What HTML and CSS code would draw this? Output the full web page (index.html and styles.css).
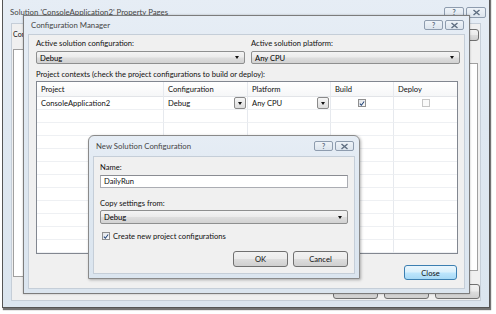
FILE: index.html
```html
<!DOCTYPE html>
<html lang="en">
<head>
    <meta charset="UTF-8">
    <meta name="viewport" content="width=device-width, initial-scale=1.0">
    <title>Configuration Manager</title>
    <link rel="stylesheet" href="styles.css">
</head>
<body>

<div class="desktop">

    <!-- property pages window, in the back -->
    <div class="win win-outer">
        <div class="titlebar">
            <span class="title">Solution 'ConsoleApplication2' Property Pages</span>
            <div class="caption">
                <span class="cap-btn">?</span>
                <span class="cap-btn"><svg width="9" height="7" viewBox="0 0 9 7"><path d="M1.5 1 L7.5 6 M7.5 1 L1.5 6" stroke="#5d6d80" stroke-width="1.4" fill="none"/></svg></span>
            </div>
        </div>
        <div class="client outer-client">
            <div class="outer-top">
                <span class="outer-label">Configuration:</span>
                <span class="btn outer-cm-btn"><i class="dot"></i></span>
            </div>
            <div class="outer-main">
                <div class="tree"></div>
                <div class="props"></div>
            </div>
            <div class="outer-foot">
                <span class="btn outer-btn"></span>
                <span class="btn outer-btn"></span>
                <span class="btn outer-btn"></span>
            </div>
        </div>
    </div>

    <!-- configuration manager -->
    <div class="win win-cm">
        <div class="titlebar">
            <span class="title">Configuration Manager</span>
            <div class="caption">
                <span class="cap-btn">?</span>
                <span class="cap-btn"><svg width="9" height="7" viewBox="0 0 9 7"><path d="M1.5 1 L7.5 6 M7.5 1 L1.5 6" stroke="#5d6d80" stroke-width="1.4" fill="none"/></svg></span>
            </div>
        </div>
        <div class="client cm-client">
            <div class="cm-pickers">
                <div class="field">
                    <label>Active solution configuration:</label>
                    <div class="combo"><span>Debug</span><i class="arrow"></i></div>
                </div>
                <div class="field">
                    <label>Active solution platform:</label>
                    <div class="combo"><span>Any CPU</span><i class="arrow"></i></div>
                </div>
            </div>
            <p class="section">Project contexts (check the project configurations to build or deploy):</p>
            <div class="grid">
                <div class="row head">
                    <div class="cell">Project</div>
                    <div class="cell">Configuration</div>
                    <div class="cell">Platform</div>
                    <div class="cell">Build</div>
                    <div class="cell">Deploy</div>
                </div>
                <div class="row">
                    <div class="cell">ConsoleApplication2</div>
                    <div class="cell">Debug <span class="drop"><i class="arrow"></i></span></div>
                    <div class="cell">Any CPU <span class="drop"><i class="arrow"></i></span></div>
                    <div class="cell center"><span class="check on"><svg width="7" height="7" viewBox="0 0 7 7"><path d="M1 3.6 L2.8 5.6 L6 1.2" stroke="#24467a" stroke-width="1.2" fill="none"/></svg></span></div>
                    <div class="cell center"><span class="check off"></span></div>
                </div>
                <div class="row"><div class="cell"></div><div class="cell"></div><div class="cell"></div><div class="cell"></div><div class="cell"></div></div>
                <div class="row"><div class="cell"></div><div class="cell"></div><div class="cell"></div><div class="cell"></div><div class="cell"></div></div>
                <div class="row"><div class="cell"></div><div class="cell"></div><div class="cell"></div><div class="cell"></div><div class="cell"></div></div>
                <div class="row"><div class="cell"></div><div class="cell"></div><div class="cell"></div><div class="cell"></div><div class="cell"></div></div>
                <div class="row"><div class="cell"></div><div class="cell"></div><div class="cell"></div><div class="cell"></div><div class="cell"></div></div>
                <div class="row"><div class="cell"></div><div class="cell"></div><div class="cell"></div><div class="cell"></div><div class="cell"></div></div>
                <div class="row"><div class="cell"></div><div class="cell"></div><div class="cell"></div><div class="cell"></div><div class="cell"></div></div>
                <div class="row"><div class="cell"></div><div class="cell"></div><div class="cell"></div><div class="cell"></div><div class="cell"></div></div>
                <div class="row"><div class="cell"></div><div class="cell"></div><div class="cell"></div><div class="cell"></div><div class="cell"></div></div>
                <div class="row"><div class="cell"></div><div class="cell"></div><div class="cell"></div><div class="cell"></div><div class="cell"></div></div>
                <div class="row"><div class="cell"></div><div class="cell"></div><div class="cell"></div><div class="cell"></div><div class="cell"></div></div>
            </div>
            <div class="cm-foot">
                <span class="btn btn-default">Close</span>
            </div>
        </div>
    </div>

    <!-- new solution configuration dialog, on top -->
    <div class="win win-new">
        <div class="titlebar">
            <span class="title">New Solution Configuration</span>
            <div class="caption">
                <span class="cap-btn">?</span>
                <span class="cap-btn"><svg width="9" height="7" viewBox="0 0 9 7"><path d="M1.5 1 L7.5 6 M7.5 1 L1.5 6" stroke="#5d6d80" stroke-width="1.4" fill="none"/></svg></span>
            </div>
        </div>
        <div class="client new-client">
            <label>Name:</label>
            <div class="textbox">DailyRun</div>
            <label class="copy-label">Copy settings from:</label>
            <div class="combo combo-tall"><span>Debug</span><i class="arrow"></i></div>
            <div class="check-row">
                <span class="check on"><svg width="7" height="7" viewBox="0 0 7 7"><path d="M1 3.6 L2.8 5.6 L6 1.2" stroke="#24467a" stroke-width="1.2" fill="none"/></svg></span>
                <span>Create new project configurations</span>
            </div>
            <div class="new-foot">
                <span class="btn btn-dlg">OK</span>
                <span class="btn btn-dlg">Cancel</span>
            </div>
        </div>
    </div>

</div>

</body>
</html>
```

FILE: styles.css
```css
body {
    margin: 0;
    padding: 0;
    background-color: #fff;
    font-family: "Lato", "Open Sans", sans-serif;
    font-size: 7.6px;
    color: #111;
}
.desktop {
    position: relative;
    width: 496px;
    height: 314px;
    overflow: hidden;
}

/* windows sit on a free canvas, so they are placed by coordinates */
.win {
    position: absolute;
    display: flex;
    flex-direction: column;
    box-sizing: border-box;
    background: linear-gradient(#e6edf5, #dfe8f1 40%, #dbe5ef);
    border: 1px solid #7c7c7c;
}
.win-outer {
    left: 2px;
    top: -4px;
    width: 488px;
    height: 312px;
    border-color: #555;
    box-shadow: 1px 2px 1px rgba(0, 0, 0, 0.55);
}
.win-cm {
    left: 23px;
    top: 15px;
    width: 447px;
    height: 279px;
    box-shadow: 0 0 2px rgba(0, 0, 0, 0.25);
}
.win-new {
    left: 88px;
    top: 135px;
    width: 272px;
    height: 144px;
    border-radius: 6px 6px 0 0;
    border-color: #8a8a8a;
    box-shadow: 1px 1px 3px rgba(0, 0, 0, 0.3);
}

.titlebar {
    display: flex;
    align-items: center;
    justify-content: space-between;
    padding: 0 5px 0 7px;
    flex-shrink: 0;
}
.win-outer .titlebar {
    height: 22px;
    padding-top: 4px;
    padding-right: 3px;
}
.win-cm .titlebar {
    height: 18px;
}
.win-new .titlebar {
    height: 20px;
}
.title {
    color: #464646;
    font-size: 7.8px;
    white-space: nowrap;
}
.caption {
    display: flex;
    gap: 2px;
}
.cap-btn {
    display: flex;
    align-items: center;
    justify-content: center;
    width: 17px;
    height: 8px;
    border: 1px solid #8e9cae;
    border-radius: 2px;
    background: linear-gradient(#eef3f8, #dce4ed);
    color: #5d6d80;
    font-size: 7px;
    font-weight: bold;
    line-height: 8px;
}
.win-outer .cap-btn {
    width: 18px;
    height: 9px;
}

.client {
    flex: 1;
    margin: 0 4px 4px 4px;
    background-color: #f0f0f0;
    border: 1px solid #c5ced8;
    box-sizing: border-box;
    display: flex;
    flex-direction: column;
}
label, .section {
    display: block;
    line-height: 10px;
    margin: 0;
    white-space: nowrap;
}

/* property pages (mostly hidden) */
.outer-client {
    margin: 0 8px 7px 8px;
    padding: 0 0 1px 1px;
}
.outer-top {
    display: flex;
    justify-content: space-between;
    align-items: center;
    margin-top: 5px;
    height: 12px;
    padding-right: 1px;
}
.outer-label {
    font-size: 7.1px;
    line-height: 8px;
}
.outer-cm-btn {
    width: 110px;
    height: 12px;
    justify-content: flex-end;
    padding-right: 6px;
}
.dot {
    display: block;
    width: 1px;
    height: 1px;
    background-color: #333;
    margin-top: 3px;
}
.outer-main {
    display: flex;
    gap: 10px;
    margin-top: 8px;
    height: 228px;
    align-items: flex-start;
}
.tree {
    width: 170px;
    height: 100%;
    background-color: #fff;
    border: 1px solid #a0a0a0;
    box-sizing: border-box;
}
.props {
    flex: 1;
    margin-top: 14px;
    margin-right: 2px;
    height: 208px;
    background-color: #fff;
    border: 1px solid #a0a0a0;
    box-sizing: border-box;
}
.outer-foot {
    display: flex;
    justify-content: flex-end;
    gap: 6px;
    margin-top: 7px;
}
.outer-btn {
    width: 45px;
    height: 15px;
}

/* buttons */
.btn {
    display: flex;
    align-items: center;
    justify-content: center;
    box-sizing: border-box;
    border: 1px solid #707070;
    border-radius: 3px;
    background: linear-gradient(#f2f2f2 0%, #ebebeb 48%, #dddddd 52%, #cfcfcf 100%);
    color: #111;
}
.btn-default {
    width: 53px;
    height: 15px;
    border-color: #3c7fb1;
    background: linear-gradient(#eaf6fd 0%, #d9f0fc 48%, #bee6fd 52%, #a7d9f5 100%);
}
.btn-dlg {
    width: 55px;
    height: 16px;
}

/* combo boxes */
.combo {
    display: flex;
    align-items: center;
    justify-content: space-between;
    height: 13px;
    box-sizing: border-box;
    border: 1px solid #8e8f8f;
    border-radius: 2px;
    padding: 0 5px 0 3px;
    background: linear-gradient(#f4f4f4 0%, #ebebeb 48%, #dedede 52%, #d2d2d2 100%);
    color: #000;
}
.combo-tall {
    height: 14px;
}
.arrow {
    display: block;
    width: 0;
    height: 0;
    border-left: 2.5px solid transparent;
    border-right: 2.5px solid transparent;
    border-top: 3px solid #111;
}

/* configuration manager */
.cm-client {
    padding: 3px 6px 0 7px;
}
.cm-pickers {
    display: grid;
    grid-template-columns: 209px 209px;
    gap: 6px;
}
.cm-pickers label {
    margin-bottom: 3px;
}
.section {
    margin-top: 5px;
    margin-bottom: 2px;
}
.grid {
    width: 422px;
    box-sizing: border-box;
    border: 1px solid #828790;
    background-color: #fff;
}
.row {
    display: grid;
    grid-template-columns: 127px 84px 83px 63px 63px;
    height: 13px;
}
.row.head {
    height: 15px;
    background: linear-gradient(#fff, #f5f6f7);
}
.cell {
    display: flex;
    align-items: center;
    justify-content: space-between;
    padding-left: 4px;
    box-sizing: border-box;
    border-right: 1px solid #e6e9ee;
    border-bottom: 1px solid #eef0f3;
    white-space: nowrap;
}
.head .cell {
    border-bottom-color: #e2e4e8;
}
.cell:last-child {
    border-right: none;
}
.cell.center {
    justify-content: center;
    padding-left: 0;
}
.drop {
    display: flex;
    align-items: center;
    justify-content: center;
    width: 12px;
    height: 12px;
    margin-right: 1px;
    box-sizing: border-box;
    border: 1px solid #8a8a8a;
    border-radius: 2px;
    background: linear-gradient(#f6f6f6, #dcdcdc);
}
.check {
    display: flex;
    align-items: center;
    justify-content: center;
    width: 8px;
    height: 8px;
    box-sizing: border-box;
    border: 1px solid #8f8f8f;
    background: linear-gradient(135deg, #e0e3e8, #fcfcfc);
}
.check.off {
    border-color: #c6c6c6;
    background: #fafafa;
}
.cm-foot {
    display: flex;
    justify-content: flex-end;
    margin-top: 11px;
    padding-right: 1px;
}

/* new solution configuration */
.new-client {
    padding: 5px 6px 0 6px;
}
.new-client .textbox {
    margin-top: 3px;
}
.textbox {
    height: 13px;
    line-height: 11px;
    box-sizing: border-box;
    padding-left: 3px;
    border: 1px solid #abadb3;
    border-top-color: #8a8c92;
    background-color: #fff;
}
.copy-label {
    margin-top: 10px;
    margin-bottom: 2px;
}
.check-row {
    display: flex;
    align-items: center;
    gap: 3px;
    margin-top: 7px;
    height: 10px;
    padding-left: 2px;
}
.new-foot {
    display: flex;
    justify-content: flex-end;
    gap: 5px;
    margin-top: 10px;
}
```
